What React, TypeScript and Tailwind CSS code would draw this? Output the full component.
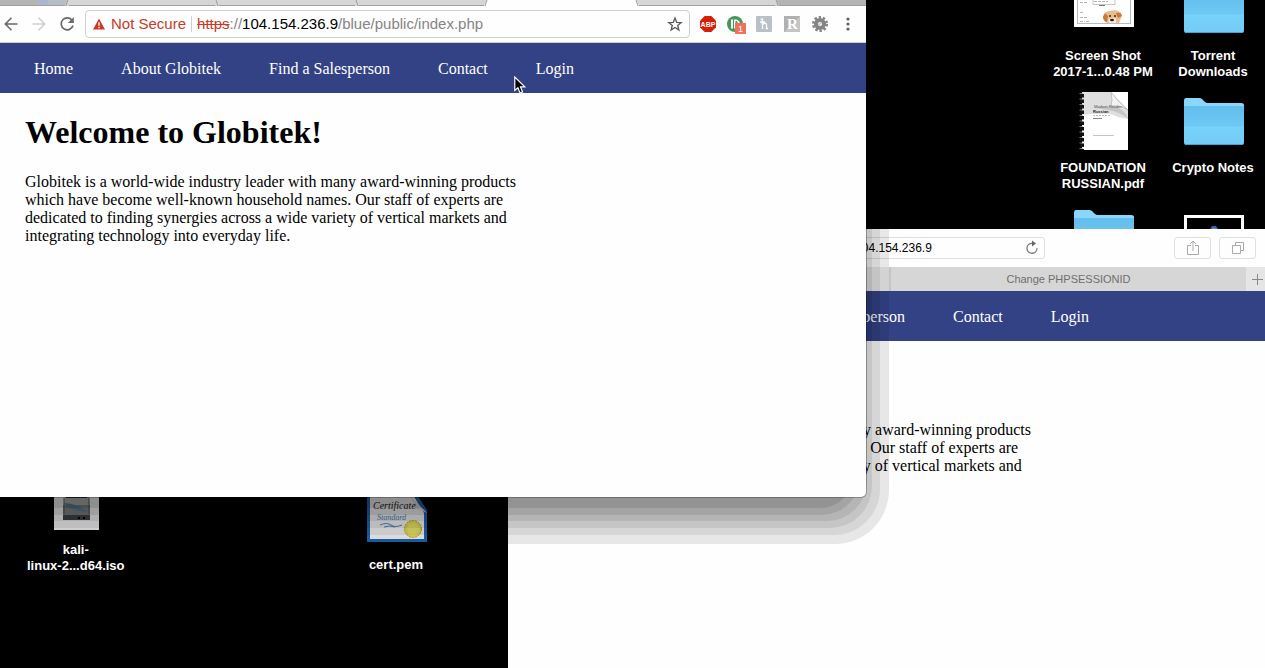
import type { ReactNode } from "react";

const links = ["Home", "About Globitek", "Find a Salesperson", "Contact", "Login"];

function GlobitekPage() {
  return (
    <div className="font-['Liberation_Serif',serif] text-base text-black">
      <nav className="flex h-[50px] items-center gap-12 whitespace-nowrap bg-[#334285] pl-[41px] pt-0.5 text-white">
        {links.map((l) => (
          <a key={l} href="#">
            {l}
          </a>
        ))}
      </nav>
      <section className="px-8 pt-[21px]">
        <h1 className="text-[32px] font-bold leading-[37px]">Welcome to Globitek!</h1>
        <p className="mt-[22px] max-w-[500px] leading-[18px]">
          Globitek is a world-wide industry leader with many award-winning products which have become well-known
          household names. Our staff of experts are dedicated to finding synergies across a wide variety of vertical
          markets and integrating technology into everyday life.
        </p>
      </section>
    </div>
  );
}

function TabEdge({ left, right, rising }: { left: string; right: string; rising?: boolean }) {
  return (
    <svg viewBox="0 0 4 6" className="h-[6px] w-1 shrink-0" aria-hidden="true">
      <rect width="4" height="6" fill={right} />
      <path d={rising ? "M0 0H3L0 6Z" : "M0 0H1L4 6H0Z"} fill={left} />
      <path d={rising ? "M3 0L1 6" : "M1 0L3 6"} stroke="#a0a0a0" strokeWidth="1" />
    </svg>
  );
}

function ToolButton({ label, children }: { label: string; children: ReactNode }) {
  return (
    <button aria-label={label} className="flex h-7 w-7 shrink-0 items-center justify-center">
      {children}
    </button>
  );
}

function Folder() {
  return (
    <svg viewBox="0 0 60 47" className="h-[47px] w-[60px]" aria-hidden="true">
      <defs>
        <linearGradient id="folderFront" x1="0" y1="0" x2="0" y2="1">
          <stop offset="0" stopColor="#64bdec" />
          <stop offset="0.5" stopColor="#6cc8f5" />
          <stop offset="0.55" stopColor="#77d1f9" />
          <stop offset="1" stopColor="#72cdf7" />
        </linearGradient>
      </defs>
      <path d="M0 3Q0 0 2 0H15Q17 0 18 1L21 4Q22 5 24 5H57Q60 5 60 7V20H0Z" fill="#8ad7fc" />
      <path d="M0 8H60V44Q60 47 58 47H2Q0 47 0 44Z" fill="url(#folderFront)" />
      <path d="M1 46.5H59" stroke="#4ba3d3" strokeWidth="1" />
    </svg>
  );
}

function PuppyShot() {
  return (
    <svg viewBox="0 0 60 52" className="h-[52px] w-[60px]" aria-hidden="true">
      <rect width="60" height="52" fill="#fff" />
      <rect x="3.5" y="2.5" width="53" height="46" fill="none" stroke="#b9bcbf" />
      <path d="M19 22V29.500H41V20" fill="none" stroke="#c7c7c7" />
      <path d="M6 27.500H14M20 26.500H34M6 37.500H10M6 42.500H13M6 46.500H11M12 46.500H15" stroke="#b5b5b5" strokeDasharray="3 1" />
      <path d="M25 30.500H31" stroke="#777" />
      <path d="M29 42Q30 36 36 36Q42 34 46 37Q49 40 47 43L45 48H34L31 47Z" fill="#e8bd8b" />
      <path d="M29 42L31 38L34 41L33 47Q29 46 29 42ZM42 38Q47 37 48 41L44 43Z" fill="#c27b3d" />
      <path d="M34 45Q38 41 42 44L42 48H35Z" fill="#f8ead8" />
      <circle cx="36" cy="41" r="1" fill="#38251c" />
      <circle cx="41" cy="41" r="1" fill="#38251c" />
      <ellipse cx="38" cy="45" rx="2" ry="1.200" fill="#2b1b17" />
    </svg>
  );
}

function NotebookPdf() {
  return (
    <svg viewBox="0 0 50 58" className="h-[58px] w-[50px]" aria-hidden="true">
      <rect x="3" width="46" height="58" fill="#fff" />
      <path d="M3 0H33L49 17V27Q40 26 31 22Q18 21 3 23Z" fill="#dfdfdf" />
      <path d="M31 0H49V18Q40 7 31 0Z" fill="#fff" />
      <path d="M32 0Q34 9 32 14Q43 13 49 18Q39 10 32 0Z" fill="#f2f2f2" stroke="#aaa" strokeWidth="0.600" />
      <path d="M32 14Q46 16 49 27Q41 18 14 16Z" fill="#c5c5c5" />
      <path d="M3 2V58" stroke="#111" strokeWidth="4" strokeDasharray="3.500 2" />
      <path d="M2 1V58" stroke="#777" strokeWidth="3" strokeDasharray="1 4.500" />
      <text x="15" y="16" fontSize="4" fill="#555" fontFamily="Liberation Sans">Modern Reader</text>
      <text x="14" y="21" fontSize="4" fontWeight="bold" fill="#222" fontFamily="Liberation Sans">Russian</text>
      <path d="M14 23.500H31" stroke="#bbb" strokeDasharray="2 1" />
      <path d="M14 26.500H23" stroke="#888" />
      <path d="M14 43.500H35" stroke="#c4c4c4" />
    </svg>
  );
}

function FramedPicture() {
  return (
    <svg viewBox="0 0 60 46" className="h-[46px] w-[60px]" aria-hidden="true">
      <rect x="1.500" y="1.500" width="57" height="43" stroke="#fff" strokeWidth="3" />
      <path d="M26 14L28 11H32L34 14Z" fill="#2b67bd" />
      <circle cx="30" cy="15" r="2" fill="#b88a62" />
    </svg>
  );
}

function DiskImage() {
  return (
    <svg viewBox="0 0 45 60" className="h-[60px] w-[45px]" aria-hidden="true">
      <rect width="45" height="60" fill="#f6f6f6" />
      <path d="M12 14H34L36 44V50H9V44Z" fill="#b0b2b3" />
      <path d="M9 35H36V45H9Z" fill="#85888a" />
      <path d="M9 45H36V50H9Z" fill="#424548" />
      <path d="M11 33Q24 34 34 42Q22 41 12 37Z" fill="#5f8196" />
      <path d="M10 28V44M35 28V44" stroke="#555" />
      <path d="M12 27.500H33" stroke="#333" />
      <path d="M24 48H26M29 48H31" stroke="#000" strokeWidth="2" />
    </svg>
  );
}

function Certificate() {
  return (
    <svg viewBox="0 0 60 60" className="h-[60px] w-[60px]" aria-hidden="true">
      <path d="M0 0H42L60 28V60H0Z" fill="#1d65ae" />
      <path d="M3 3H40L57 31V57H3Z" fill="#f1f1f1" />
      <path d="M43 14L60 31Q52 27 48 27Q47 21 43 14Z" fill="#ddd" />
      <text x="6" y="27" fontSize="10" fontStyle="italic" fill="#252525" fontFamily="Liberation Serif">Certificate</text>
      <text x="10" y="38" fontSize="8" fontStyle="italic" fill="#4389ce" fontFamily="Liberation Serif">Standard</text>
      <path d="M13 43Q20 40 24 43T35 43M17 45Q23 43 28 45" fill="none" stroke="#4389ce" />
      <circle cx="46" cy="47" r="8.500" fill="#e4d94e" stroke="#b0a42b" strokeDasharray="2 1" />
      <circle cx="46" cy="47" r="6" fill="#ebe46c" />
    </svg>
  );
}

function DesktopItem({ lines, children }: { lines: string[]; children: ReactNode }) {
  return (
    <figure className="flex flex-col items-center gap-2.5">
      <div className="flex h-16 items-center justify-center pl-0.5">{children}</div>
      <figcaption className="whitespace-nowrap text-center text-[13px] font-bold leading-4 text-white">
        {lines.map((l) => (
          <div key={l}>{l}</div>
        ))}
      </figcaption>
    </figure>
  );
}

function SafariWindow() {
  return (
    <section aria-label="Safari" className="absolute bottom-0 left-[508px] right-0 top-[229px] overflow-hidden bg-[#fefefe]">
      <div className="flex h-[38px] items-center gap-2 pl-[234px] pr-[9px]">
        <label className="flex h-[22px] w-[303px] items-center rounded-[3px] border border-[#dedede] px-1">
          <span className="w-4" />
          <input
            aria-label="Address"
            defaultValue="104.154.236.9"
            className="min-w-0 flex-1 bg-transparent text-center text-xs text-black outline-none"
          />
          <svg viewBox="0 0 16 16" className="h-4 w-4 shrink-0" fill="none" stroke="#777" strokeWidth="1.300">
            <path d="M10 3.300H7.500A5 5 0 1 0 13 8.300" />
            <path d="M8 0.500L12 3.500L8 6.500Z" fill="#666" stroke="none" />
          </svg>
        </label>
        <span className="flex-1" />
        <button aria-label="Share" className="flex h-[22px] w-[37px] items-center justify-center rounded-[3px] border border-[#dedede]">
          <svg viewBox="0 0 16 16" className="h-4 w-4" fill="none" stroke="#aaa">
            <path d="M6 5.500H2.500V14.500H13.500V5.500H10M8 11V1M5 4L8 1L11 4" />
          </svg>
        </button>
        <button aria-label="Show all tabs" className="flex h-[22px] w-[37px] items-center justify-center rounded-[3px] border border-[#dedede]">
          <svg viewBox="0 0 16 16" className="h-4 w-4" fill="none" stroke="#aaa">
            <path d="M2.500 5.500H10.500V13.500H2.500ZM5.500 5.500V2.500H13.500V10.500H10.500" />
          </svg>
        </button>
      </div>
      <div className="flex h-6 text-[11px] text-[#6f6f6f]">
        <button aria-label="Globitek tab" className="w-[383px] border-r-2 border-[#c4c4c4] bg-[#e8e8e8]" />
        <button className="flex-1 bg-[#d6d6d6]">Change PHPSESSIONID</button>
        <button aria-label="New tab" className="flex w-[19px] items-center justify-end bg-[#e5e5e5] pr-0.5">
          <svg viewBox="0 0 11 11" className="h-[11px] w-[11px]" stroke="#888">
            <path d="M5.500 0V11M0 5.500H11" />
          </svg>
        </button>
      </div>
      <GlobitekPage />
    </section>
  );
}

function WindowShadow() {
  return (
    <div aria-hidden="true">
      <div className="absolute -bottom-[47px] -right-[23px] left-0 top-0 rounded-br-[54px] bg-black/[0.09]" />
      <div className="absolute -bottom-[38px] -right-[14px] left-0 top-0 rounded-br-[46px] bg-black/[0.07]" />
      <div className="absolute -bottom-[31px] -right-[6px] left-0 top-0 rounded-br-[42px] bg-black/[0.08]" />
      <div className="absolute -bottom-[24px] -right-px left-0 top-0 rounded-br-[40px] bg-black/[0.08]" />
      <div className="absolute -bottom-[18px] left-0 right-[6px] top-0 rounded-br-[38px] bg-black/[0.09]" />
      <div className="absolute -bottom-[11px] left-0 right-[12px] top-0 rounded-br-[34px] bg-black/[0.10]" />
    </div>
  );
}

function ChromeWindow() {
  return (
    <section aria-label="Chrome" className="absolute -left-[7px] top-0 h-[497px] w-[873px]">
      <WindowShadow />
      <div className="relative h-full overflow-hidden rounded-br-[5px] bg-[#fefefe] shadow-[0_0_0_1px_rgba(0,0,0,0.25)]">
        <div className="flex h-[6px]">
          <span className="w-[43px] border-b border-[#a0a0a0] bg-[#b4b4b4]" />
          <span className="w-3 border-b border-[#a0a0a0] bg-[#aeb4cc]" />
          <span className="w-[17px] border-b border-[#a0a0a0] bg-[#b6bdc5]" />
          <TabEdge left="#b6bdc5" right="#d6d6d6" rising />
          <span className="w-[146px] border-b border-[#a0a0a0] bg-[#d6d6d6]" />
          <TabEdge left="#d6d6d6" right="#d6d6d6" />
          <span className="w-[136px] border-b border-[#a0a0a0] bg-[#d6d6d6]" />
          <TabEdge left="#d6d6d6" right="#d6d6d6" />
          <span className="w-[125px] border-b border-[#a0a0a0] bg-[#d6d6d6]" />
          <TabEdge left="#d6d6d6" right="#fefefe" rising />
          <span className="w-[147px]" />
          <TabEdge left="#fefefe" right="#d6d6d6" />
          <span className="w-[136px] border-b border-[#a0a0a0] bg-[#d6d6d6]" />
          <TabEdge left="#d6d6d6" right="#b4b4b4" />
          <span className="flex-1 border-b border-[#a0a0a0] bg-[#b4b4b4]" />
        </div>
        <div className="flex h-[37px] items-center border-b border-[#d0d0d0] px-1">
          <ToolButton label="Back">
            <svg viewBox="0 0 16 16" className="h-4 w-4" fill="none" stroke="#6a6a6a" strokeWidth="1.600">
              <path d="M14.500 8H2.500M8.500 1.800L2.300 8L8.500 14.200" />
            </svg>
          </ToolButton>
          <ToolButton label="Forward">
            <svg viewBox="0 0 16 16" className="h-4 w-4" fill="none" stroke="#d0d0d0" strokeWidth="1.600">
              <path d="M1.500 8H13.500M7.500 1.800L13.700 8L7.500 14.200" />
            </svg>
          </ToolButton>
          <ToolButton label="Reload">
            <svg viewBox="0 0 16 16" className="h-4 w-4" fill="none" stroke="#6a6a6a" strokeWidth="1.700">
              <path d="M13.200 4.500A6 6 0 1 0 14 9.500" />
              <path d="M14.800 1V7H8.800Z" fill="#6a6a6a" stroke="none" />
            </svg>
          </ToolButton>
          <div className="mx-1 flex h-7 min-w-0 flex-1 items-center whitespace-nowrap rounded-[4px] border border-[#d0d0d0] pl-[7px] text-[15px]">
            <svg viewBox="0 0 12 12" className="mr-1.5 h-3 w-3 shrink-0" aria-hidden="true">
              <path d="M6 0.500L12 11.500H0Z" fill="#c93a27" />
              <path d="M6 4.200V7.800M6 8.800V10.200" stroke="#fff" strokeWidth="1.300" />
            </svg>
            <span className="text-[#c93a27]">Not Secure</span>
            <span className="mx-[5px] h-4 w-px bg-[#d0d0d0]" />
            <span className="flex-1 text-[#858585]">
              <span className="text-[#c93a27] line-through">https</span>://
              <span className="text-black">104.154.236.9</span>/blue/public/index.php
            </span>
            <ToolButton label="Bookmark this page">
              <svg viewBox="0 0 16 16" className="h-4 w-4" fill="none" stroke="#5a5a5a" strokeWidth="1.300">
                <path d="M8 2L9.700 6.300L14.200 6.600L10.700 9.500L11.900 14L8 11.500L4.100 14L5.300 9.500L1.800 6.600L6.300 6.300Z" />
              </svg>
            </ToolButton>
          </div>
          <ToolButton label="Adblock Plus">
            <svg viewBox="0 0 16 16" className="h-4 w-4">
              <path d="M4.700 0H11.300L16 4.700V11.300L11.300 16H4.700L0 11.300V4.700Z" fill="#d81e05" />
              <text x="8" y="10.600" textAnchor="middle" fontSize="7" fontWeight="bold" fill="#fff" fontFamily="Liberation Sans">ABP</text>
            </svg>
          </ToolButton>
          <ToolButton label="Pushbullet, 1 notification">
            <svg viewBox="0 0 20 20" className="h-5 w-5">
              <circle cx="9" cy="10" r="8" fill="#43985a" />
              <path d="M5 5.500H7V14.500H5ZM8 5.500H10.500Q14 6.500 14 10T10.500 14.500H8Z" fill="#fff" />
              <path d="M9.500 7H10.500Q12 8 12 10H9.500Z" fill="#43985a" />
              <rect x="9" y="9" width="11" height="11" fill="#ef705b" />
              <text x="14.500" y="18" textAnchor="middle" fontSize="9" fill="#fff" fontFamily="Liberation Sans">1</text>
            </svg>
          </ToolButton>
          <ToolButton label="Honey">
            <svg viewBox="0 0 16 16" className="h-4 w-4">
              <rect width="16" height="16" rx="1" fill="#b9c0c9" />
              <path d="M6.500 2.500V13M6.500 9Q7 7 9 7Q10.500 7 10.500 9V12.500H12M4 6H9M4.500 3.500L6.500 2.500" fill="none" stroke="#fff" strokeWidth="1.300" />
            </svg>
          </ToolButton>
          <ToolButton label="R extension">
            <svg viewBox="0 0 16 16" className="h-4 w-4">
              <rect width="16" height="16" fill="#b0b0b0" />
              <path d="M0 16L16 0V16Z" fill="#c4c4c4" />
              <text x="8.500" y="13" textAnchor="middle" fontSize="15" fontWeight="bold" fill="#fff" fontFamily="Liberation Serif">R</text>
            </svg>
          </ToolButton>
          <ToolButton label="Settings extension">
            <svg viewBox="0 0 16 16" className="h-4 w-4" fill="none">
              <circle cx="8" cy="8" r="6.500" stroke="#858585" strokeWidth="3" strokeDasharray="2.300 1.780" />
              <circle cx="8" cy="8" r="4" stroke="#858585" strokeWidth="4" />
              <path d="M6.500 9L9.500 6.500" stroke="#c9c9c9" strokeWidth="1.500" />
            </svg>
          </ToolButton>
          <ToolButton label="Chrome menu">
            <svg viewBox="0 0 16 16" className="h-4 w-4" fill="#5f5f5f">
              <circle cx="8" cy="3" r="1.600" />
              <circle cx="8" cy="8" r="1.600" />
              <circle cx="8" cy="13" r="1.600" />
            </svg>
          </ToolButton>
        </div>
        <GlobitekPage />
      </div>
    </section>
  );
}

export default function App() {
  return (
    <main className="relative h-screen overflow-hidden bg-black font-['Liberation_Sans',sans-serif]">
      <div className="absolute -right-[3px] -top-[26px] grid auto-rows-[112px] grid-cols-[110px_110px]">
        <DesktopItem lines={["Screen Shot", "2017-1...0.48 PM"]}>
          <div className="pb-[10px]">
            <PuppyShot />
          </div>
        </DesktopItem>
        <DesktopItem lines={["Torrent", "Downloads"]}>
          <div className="pt-1.5">
            <Folder />
          </div>
        </DesktopItem>
        <DesktopItem lines={["FOUNDATION", "RUSSIAN.pdf"]}>
          <div className="pt-1.5">
            <NotebookPdf />
          </div>
        </DesktopItem>
        <DesktopItem lines={["Crypto Notes"]}>
          <div className="pt-1.5">
            <Folder />
          </div>
        </DesktopItem>
        <DesktopItem lines={[]}>
          <div className="pt-1.5">
            <Folder />
          </div>
        </DesktopItem>
        <DesktopItem lines={[]}>
          <div className="pt-4">
            <FramedPicture />
          </div>
        </DesktopItem>
      </div>
      <div className="absolute left-[27px] top-[468px]">
        <DesktopItem lines={["kali-", "linux-2...d64.iso"]}>
          <DiskImage />
        </DesktopItem>
      </div>
      <div className="absolute left-[365px] top-[483px]">
        <DesktopItem lines={["cert.pem"]}>
          <div className="pb-1.5">
            <Certificate />
          </div>
        </DesktopItem>
      </div>
      <SafariWindow />
      <ChromeWindow />
      <svg viewBox="0 0 12 18" className="absolute left-[514px] top-[76px] h-[18px] w-3" aria-hidden="true">
        <path d="M0.800 1V14.500L3.900 11.800L6 17L8.600 15.900L6.500 10.900H10.800Z" fill="#000" stroke="#fff" strokeWidth="1.200" />
      </svg>
    </main>
  );
}
